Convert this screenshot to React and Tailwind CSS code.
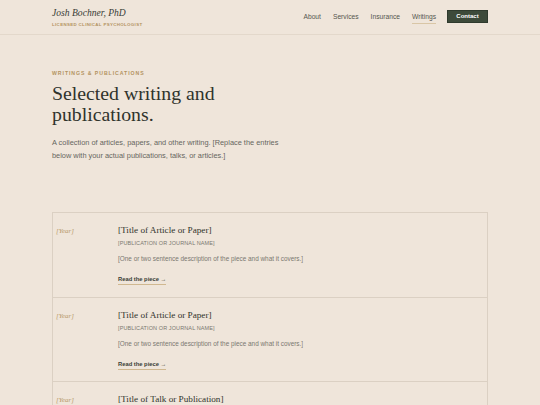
import React from "react";

const sans = "font-['Liberation_Sans',Arial,sans-serif]";
const serif = "font-['Liberation_Serif','Times_New_Roman',serif]";

const entries = [
  {
    year: "[Year]",
    title: "[Title of Article or Paper]",
    source: "[Publication or Journal Name]",
    blurb: "[One or two sentence description of the piece and what it covers.]",
  },
  {
    year: "[Year]",
    title: "[Title of Article or Paper]",
    source: "[Publication or Journal Name]",
    blurb: "[One or two sentence description of the piece and what it covers.]",
  },
  {
    year: "[Year]",
    title: "[Title of Talk or Publication]",
    source: "[Conference or Publication Name]",
    blurb: "[One or two sentence description of the piece and what it covers.]",
  },
];

const navLinks = ["About", "Services", "Insurance", "Writings"];

const App = () => {
  return (
    <div className={`min-h-screen bg-[#efe5da] text-[#2f332c] ${sans}`}>
      {/* header */}
      <header className="h-[35px] border-b border-[#e3d8cb] px-[52px] flex items-center justify-between">
        <div className="pt-[1px]">
          <div className={`${serif} italic text-[9.6px] leading-[12px] text-[#3a3d36]`}>
            Josh Bochner, PhD
          </div>
          <div className="mt-[3px] text-[4.4px] leading-[6px] font-bold uppercase tracking-[0.08em] text-[#b3935f]">
            Licensed Clinical Psychologist
          </div>
        </div>
        <nav className="flex items-center">
          {navLinks.map((link) => (
            <a
              key={link}
              className={`text-[6.7px] font-medium text-[#55564f] mr-[12px] ${
                link === "Writings" ? "border-b-[1.5px] border-[#d9c6a6] pb-[1px] mt-[2px]" : ""
              }`}
            >
              {link}
            </a>
          ))}
          <button className="ml-[-1px] w-[41px] h-[13px] bg-[#3d4a3a] border border-[#2f3a2d] text-white text-[6px] font-bold flex items-center justify-center">
            Contact
          </button>
        </nav>
      </header>

      {/* intro */}
      <section className="px-[52px] pt-[35px]">
        <div className="text-[5.2px] leading-[6px] font-bold uppercase tracking-[0.18em] text-[#b3935f]">
          Writings &amp; Publications
        </div>
        <h1 className={`${serif} mt-[7px] text-[19.8px] leading-[21px] font-medium text-[#2f332c]`}>
          Selected writing and
          <br />
          publications.
        </h1>
        <p className="mt-[11px] text-[7.4px] leading-[13px] text-[#66655e] w-[245px]">
          A collection of articles, papers, and other writing. [Replace the entries below with your actual publications, talks, or articles.]
        </p>
      </section>

      {/* list */}
      <section className="px-[52px] pt-[50px]">
        <div className="border border-[#dbd0c3]">
          {entries.map((e, i) => (
            <div
              key={i}
              className={`flex h-[84px] ${i > 0 ? "border-t border-[#dbd0c3]" : ""}`}
            >
              <div className={`${serif} italic w-[65px] pl-[3px] pt-[13px] text-[7px] leading-[10px] text-[#b89a6b]`}>
                {e.year}
              </div>
              <div className="flex-1 pt-[11px]">
                <div className={`${serif} text-[9.2px] leading-[12px] text-[#2f332c]`}>
                  {e.title}
                </div>
                <div className="mt-[3px] text-[5.5px] leading-[8px] uppercase tracking-[0.02em] text-[#7a7870]">
                  {e.source}
                </div>
                <div className="mt-[7.5px] text-[6.4px] leading-[8px] text-[#7a7870]">
                  {e.blurb}
                </div>
                <a className="mt-[13px] block w-fit text-[5.8px] leading-[7px] font-bold text-[#3a3d36] border-b border-[#d0b890] pb-[1px]">
                  Read the piece →
                </a>
              </div>
            </div>
          ))}
        </div>
      </section>
    </div>
  );
};

export default App;
